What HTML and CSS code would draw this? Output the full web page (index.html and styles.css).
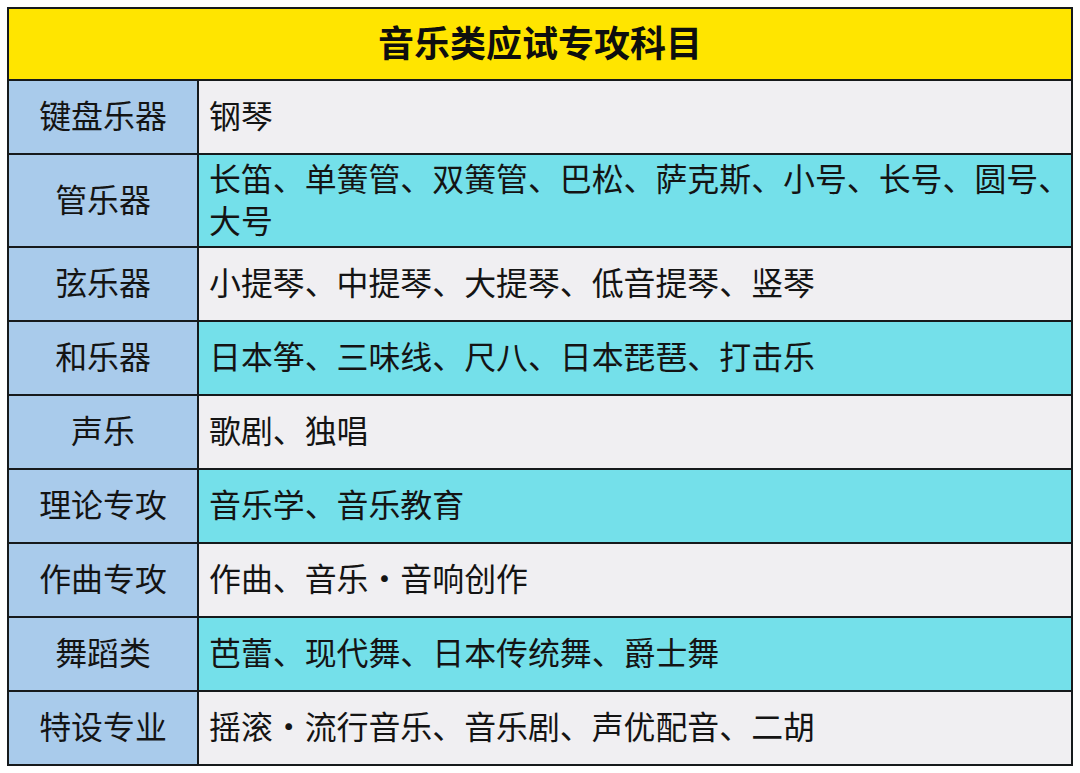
FILE: index.html
```html
<!DOCTYPE html>
<html lang="zh-CN">
<head>
<meta charset="utf-8">
<title>音乐类应试专攻科目</title>
<link rel="stylesheet" href="styles.css">
</head>
<body>
<div class="table">
  <div class="title">音乐类应试专攻科目</div>

  <div class="cat">键盘乐器</div>
  <div class="val gray">钢琴</div>

  <div class="cat">管乐器</div>
  <div class="val cyan">长笛、单簧管、双簧管、巴松、萨克斯、小号、长号、圆号、大号</div>

  <div class="cat">弦乐器</div>
  <div class="val gray">小提琴、中提琴、大提琴、低音提琴、竖琴</div>

  <div class="cat">和乐器</div>
  <div class="val cyan">日本筝、三味线、尺八、日本琵琶、打击乐</div>

  <div class="cat">声乐</div>
  <div class="val gray">歌剧、独唱</div>

  <div class="cat">理论专攻</div>
  <div class="val cyan">音乐学、音乐教育</div>

  <div class="cat">作曲专攻</div>
  <div class="val gray">作曲、音乐・音响创作</div>

  <div class="cat">舞蹈类</div>
  <div class="val cyan">芭蕾、现代舞、日本传统舞、爵士舞</div>

  <div class="cat">特设专业</div>
  <div class="val gray">摇滚・流行音乐、音乐剧、声优配音、二胡</div>
</div>
</body>
</html>
```

FILE: styles.css
```css
html, body {
  margin: 0;
  padding: 0;
  background: #ffffff;
}

body {
  font-family: "Noto Sans CJK SC", "Noto Sans", sans-serif;
  color: #141414;
}

.table {
  margin: 7px 0 0 7px;
  width: 1066px;
  box-sizing: border-box;
  display: grid;
  grid-template-columns: 188px 1fr;
  grid-template-rows: 70px 72px 91px repeat(7, 72px);
  gap: 2px;
  padding: 2px;
  background: #161a1c;
}

.title {
  grid-column: 1 / 3;
  background: #ffe500;
  display: flex;
  align-items: center;
  justify-content: center;
  padding-bottom: 6px;
  font-size: 36px;
  font-weight: 700;
  color: #0e0e0e;
}

.cat {
  background: #a9cbeb;
  display: flex;
  align-items: center;
  justify-content: center;
  padding-bottom: 6px;
  font-size: 31.9px;
  line-height: 42px;
}

.val {
  display: flex;
  align-items: center;
  padding: 0 0 6px 10px;
  font-size: 31.9px;
  line-height: 42px;
}

.gray {
  background: #f0eff2;
}

.cyan {
  background: #74e0ea;
}
```
